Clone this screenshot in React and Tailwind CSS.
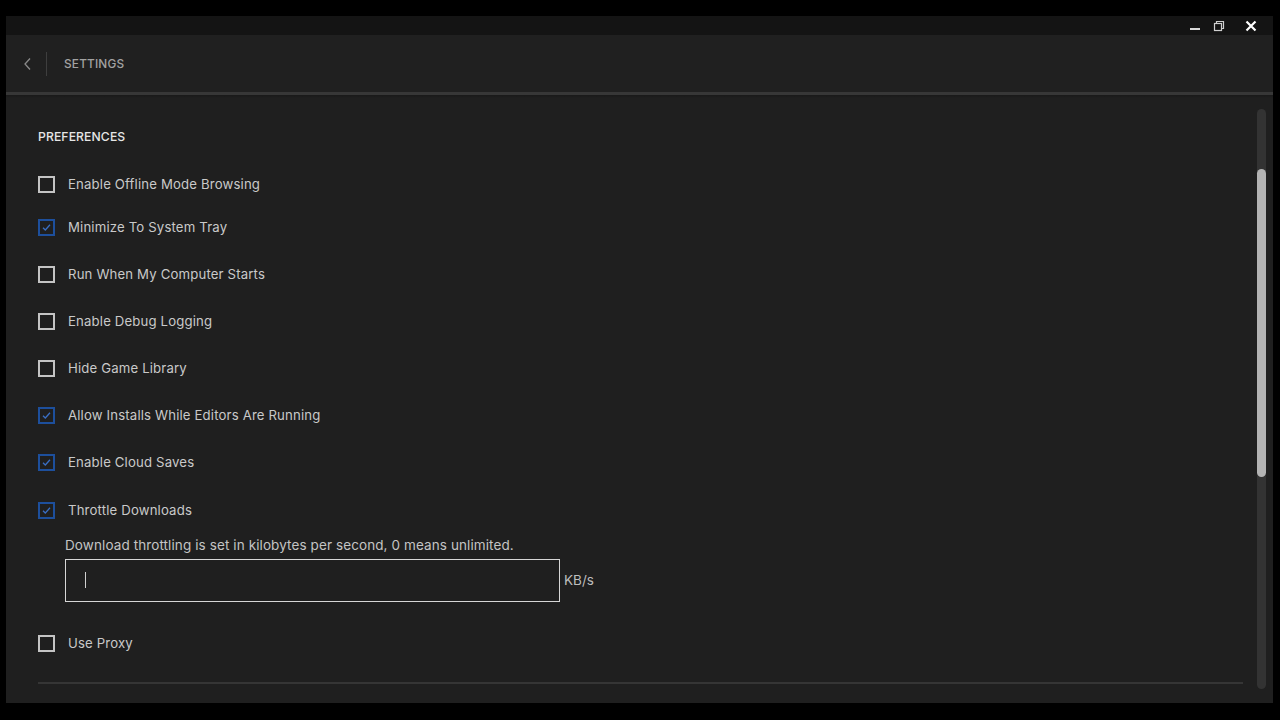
import { useState } from "react";

const prefs = [
  { label: "Enable Offline Mode Browsing", on: false },
  { label: "Minimize To System Tray", on: true },
  { label: "Run When My Computer Starts", on: false },
  { label: "Enable Debug Logging", on: false },
  { label: "Hide Game Library", on: false },
  { label: "Allow Installs While Editors Are Running", on: true },
  { label: "Enable Cloud Saves", on: true },
  { label: "Throttle Downloads", on: true },
];

function Checkbox({ on }) {
  if (on) {
    return (
      <span className="flex h-[17px] w-[17px] shrink-0 items-center justify-center border-2 border-[#1d4f9c]">
        <svg width="11" height="11" viewBox="0 0 11 11" fill="none">
          <path d="M2 5.8 L4.3 8 L9 2.8" stroke="#3a6fc4" strokeWidth="1.3" />
        </svg>
      </span>
    );
  }
  return <span className="block h-[17px] w-[17px] shrink-0 border-2 border-[#c4c4c4]" />;
}

function Row({ label, on, className = "" }) {
  return (
    <div className={`flex h-[20px] items-center gap-[13px] ${className}`}>
      <Checkbox on={on} />
      <span className="pt-px text-[13.2px] tracking-[0.15px] text-[#c9c9c9]">{label}</span>
    </div>
  );
}

export default function App() {
  const [rate, setRate] = useState("");

  return (
    <div className="flex h-[720px] w-[1280px] flex-col overflow-hidden bg-black pt-4 pb-[17px] pl-[6px] pr-[7px] font-['Inter','Open_Sans',sans-serif]">
      <div className="flex min-h-0 flex-1 flex-col bg-[#1f1f1f]">
        {/* window chrome */}
        <div className="flex h-[19px] items-center justify-end bg-[#141414] pr-[16px]">
          <svg width="12" height="12" viewBox="0 0 12 12" className="mr-[12px]">
            <rect x="1" y="8" width="10" height="2" fill="#d8d8d8" />
          </svg>
          <svg width="12" height="12" viewBox="0 0 12 12" fill="none" className="mr-[20px]">
            <rect x="1.5" y="3.5" width="7" height="7" stroke="#cfcfcf" strokeWidth="1.2" />
            <path d="M3.5 3.5 V1.5 H10.5 V8.5 H8.5" stroke="#cfcfcf" strokeWidth="1.2" />
          </svg>
          <svg width="12" height="12" viewBox="0 0 12 12">
            <path d="M1.5 1.5 L10.5 10.5 M10.5 1.5 L1.5 10.5" stroke="#ffffff" strokeWidth="2.2" />
          </svg>
        </div>

        {/* header */}
        <div className="flex h-[57px] items-center bg-[#202020]">
          <svg width="10" height="14" viewBox="0 0 10 14" fill="none" className="ml-[17px]">
            <path d="M7 1.5 L2 7 L7 12.5" stroke="#8a8a8a" strokeWidth="1.3" />
          </svg>
          <span className="ml-[13px] h-[24px] w-px bg-[#3e3e3e]" />
          <span className="ml-[17px] pt-[2px] text-[11.8px] font-medium tracking-[0.2px] text-[#a2a2a2]">SETTINGS</span>
        </div>
        <div className="h-[3px] bg-[#373737]" />
        <div className="h-[3px] bg-gradient-to-b from-[#191919] to-[#1f1f1f]" />

        {/* content */}
        <div className="flex min-h-0 flex-1">
          <div className="flex flex-1 flex-col pl-[32px] pr-[4px] pt-[30px]">
            <h2 className="text-[12.2px] font-medium tracking-[0.1px] text-[#e6e6e6]">PREFERENCES</h2>

            <div className="mt-[28px] flex flex-col">
              {prefs.map((p, i) => (
                <Row
                  key={p.label}
                  {...p}
                  className={i === 0 ? "" : i === 1 ? "mt-[23px]" : i === 7 ? "mt-[28px]" : "mt-[27px]"}
                />
              ))}
            </div>

            <div className="ml-[27px] mt-[15px]">
              <p className="text-[13.5px] tracking-[0.1px] text-[#c4c4c4]">
                Download throttling is set in kilobytes per second, 0 means unlimited.
              </p>
              <div className="mt-[3px] flex items-center gap-[4px]">
                <div className="flex h-[43px] w-[495px] items-center border border-[#d6d6d6] px-[18px]">
                  <input
                    value={rate}
                    onChange={(e) => setRate(e.target.value)}
                    className="w-full bg-transparent text-[14px] text-[#d0d0d0] outline-none"
                  />
                  <span className="absolute ml-[1px] h-[16px] w-px bg-[#cfcfcf]" />
                </div>
                <span className="text-[13.5px] text-[#bdbdbd]">KB/s</span>
              </div>
            </div>

            <Row label="Use Proxy" on={false} className="mt-[32px]" />

            <div className="mt-[28px] h-[2px] bg-[#353535]" />
          </div>

          {/* scrollbar */}
          <div className="flex w-[26px] flex-col items-start pt-[11px] pb-[14px] pl-[10px]">
            <div className="flex w-[9px] flex-1 flex-col rounded-full bg-[#333333]">
              <div className="mt-[60px] h-[308px] rounded-full bg-[#b3b3b3]" />
            </div>
          </div>
        </div>
      </div>
    </div>
  );
}
